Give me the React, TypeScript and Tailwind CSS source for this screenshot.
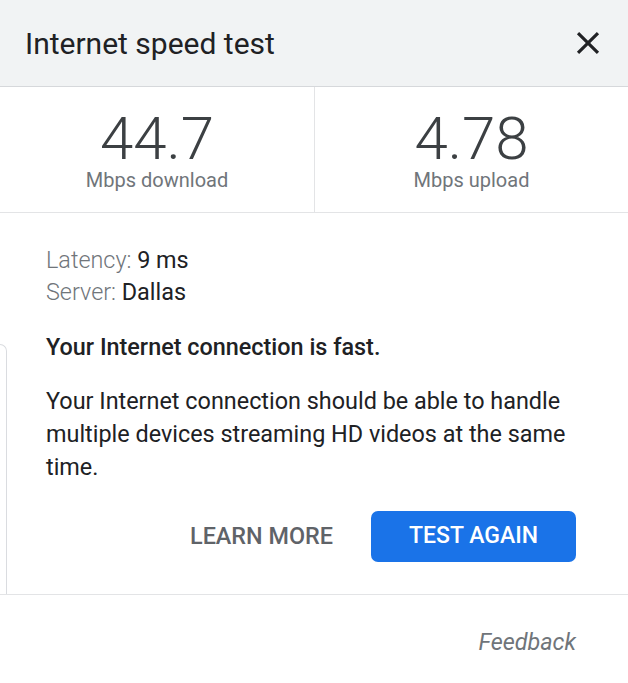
import React from "react";

function CloseIcon() {
  return (
    <svg width="38" height="38" viewBox="0 0 24 24" fill="#202124">
      <path d="M19 6.41L17.59 5 12 10.59 6.41 5 5 6.41 10.59 12 5 17.59 6.41 19 12 13.41 17.59 19 19 17.59 13.41 12z" />
    </svg>
  );
}

export default function App() {
  return (
    <div className="w-[628px] h-[683px] bg-white font-['Roboto',sans-serif] flex flex-col overflow-hidden">
      {/* Header */}
      <div className="h-[87px] shrink-0 bg-[#f1f3f4] border-b border-[#d6d8db] flex items-center justify-between pl-[25px] pr-[21px]">
        <div className="text-[30px] leading-[36px] text-[#202124] pt-[2px]">Internet speed test</div>
        <CloseIcon />
      </div>

      {/* Stats */}
      <div className="h-[126px] shrink-0 border-b border-[#e3e4e6] flex">
        <div className="w-[315px] border-r border-[#e3e4e6] flex flex-col items-center pt-[26px]">
          <div className="text-[60px] leading-[52px] font-light text-[#3c4043]">44.7</div>
          <div className="mt-[5px] text-[20px] leading-[20px] text-[#70757a]">Mbps download</div>
        </div>
        <div className="flex-1 flex flex-col items-center pt-[26px]">
          <div className="text-[60px] leading-[52px] font-light text-[#3c4043]">4.78</div>
          <div className="mt-[5px] text-[20px] leading-[20px] text-[#70757a]">Mbps upload</div>
        </div>
      </div>

      {/* Content */}
      <div className="shrink-0 border-b border-[#e3e4e6] flex">
        <div className="w-[7px] shrink-0 flex flex-col justify-end">
          <div className="h-[250px] border border-l-0 border-b-0 border-[#dadce0] rounded-tr-[8px]" />
        </div>
        <div className="flex-1 pl-[39px] pr-[52px] pt-[31px] pb-[32px]">
          <div className="text-[23.4px] leading-[32px]">
            <span className="font-light text-[#70757a]">Latency: </span>
            <span className="text-[#202124]">9 ms</span>
          </div>
          <div className="text-[23.4px] leading-[32px]">
            <span className="font-light text-[#70757a]">Server: </span>
            <span className="text-[#202124]">Dallas</span>
          </div>
          <div className="mt-[23px] text-[23.4px] leading-[32px] font-medium text-[#202124]">
            Your Internet connection is fast.
          </div>
          <div className="mt-[22px] text-[23.4px] leading-[33px] text-[#202124]">
            Your Internet connection should be able to handle multiple devices streaming HD videos at the same time.
          </div>
          <div className="mt-[27px] flex justify-end items-center">
            <div className="mr-[38px] text-[23.4px] font-medium text-[#5f6368]">LEARN MORE</div>
            <div className="h-[51px] w-[205px] rounded-[7px] bg-[#1a73e8] flex items-center justify-center text-[23px] font-medium text-white">
              TEST AGAIN
            </div>
          </div>
        </div>
      </div>

      {/* Footer */}
      <div className="flex-1 flex justify-end pr-[52px] pt-[33px]">
        <div className="text-[23.4px] leading-[28px] italic text-[#70757a]">Feedback</div>
      </div>
    </div>
  );
}
